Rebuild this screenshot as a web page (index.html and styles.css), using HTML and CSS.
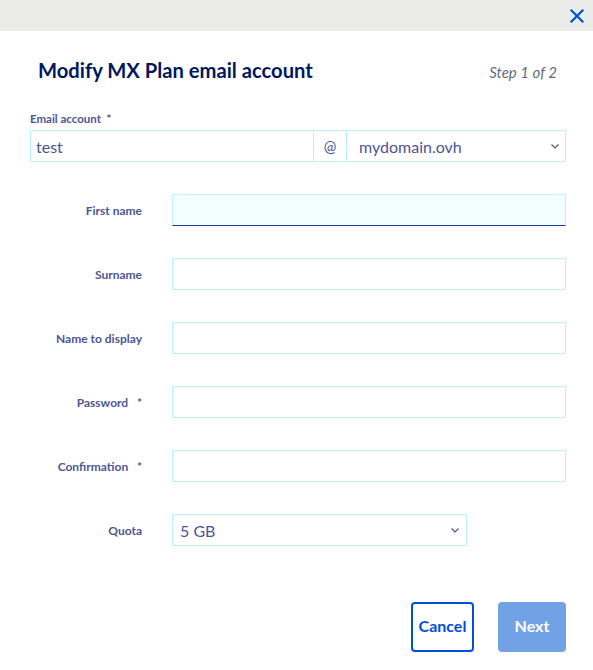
FILE: index.html
```html
<!DOCTYPE html>
<html lang="en">
<head>
<meta charset="utf-8">
<title>Modify MX Plan email account</title>
<link rel="stylesheet" href="styles.css">
</head>
<body>
<div class="modal">
  <div class="topbar">
    <button class="close" aria-label="Close">
      <svg width="14" height="14" viewBox="0 0 14 14"><path d="M1.5 1.5 L12.5 12.5 M12.5 1.5 L1.5 12.5" stroke="#0050d7" stroke-width="2.2" stroke-linecap="square" fill="none"/></svg>
    </button>
  </div>
  <div class="content">
    <div class="header">
      <h1 class="title">Modify MX Plan email account</h1>
      <span class="step">Step 1 of 2</span>
    </div>
    <div class="email-block">
      <label class="email-label">Email account&nbsp;&nbsp;*</label>
      <div class="email-group">
        <input class="field email-name" type="text" value="test">
        <span class="addon">@</span>
        <select class="field select domain"><option>mydomain.ovh</option></select>
      </div>
    </div>
    <div class="rows">
      <label class="row-label">First name</label>
      <input class="field focused" type="text">
      <label class="row-label">Surname</label>
      <input class="field" type="text">
      <label class="row-label">Name to display</label>
      <input class="field" type="text">
      <label class="row-label">Password&nbsp;&nbsp;&nbsp;*</label>
      <input class="field" type="password">
      <label class="row-label">Confirmation&nbsp;&nbsp;&nbsp;*</label>
      <input class="field" type="password">
      <label class="row-label">Quota</label>
      <select class="field select quota"><option>5 GB</option></select>
    </div>
    <div class="actions">
      <button class="btn btn-cancel">Cancel</button>
      <button class="btn btn-next">Next</button>
    </div>
  </div>
</div>
</body>
</html>
```

FILE: styles.css
```css
* { box-sizing: border-box; }
html, body { margin: 0; padding: 0; background: #fff; }
body { font-family: "Source Sans Pro", Lato, "Noto Sans", sans-serif; color: #4d5592; width: 593px; height: 670px; overflow: hidden; }
.modal { width: 593px; }
.topbar { height: 31px; background: #ebecea; display: flex; justify-content: flex-end; align-items: center; padding-right: 9px; }
.close { border: 0; background: transparent; padding: 0; width: 14px; height: 14px; display: flex; cursor: pointer; }
.content { padding: 0 27px 0 30px; }
.header { display: flex; justify-content: space-between; align-items: baseline; padding: 27px 9px 0 8px; height: 81px; }
.title { margin: 0; font-size: 20.2px; font-weight: 700; color: #00185e; letter-spacing: 0; }
.step { font-style: italic; font-size: 15px; color: #5f6b7a; }
.email-block { display: flex; flex-direction: column; }
.email-label { font-size: 11.5px; font-weight: 700; line-height: 13px; margin-bottom: 5px; }
.email-group { display: flex; height: 32px; }
.field { height: 32px; border: 1px solid #bef1ff; background: #fff; font-family: inherit; font-size: 16px; color: #4d5592; padding: 0 5px; outline: none; border-radius: 0; margin: 0; }
.email-name { flex: 1; min-width: 0; width: 284px; }
.addon { width: 32px; height: 32px; border: 1px solid #bef1ff; border-left: 0; border-right: 0; display: flex; align-items: center; justify-content: center; font-size: 15px; color: #4d5592; }
.select { appearance: none; -webkit-appearance: none; background-image: url("data:image/svg+xml;utf8,<svg xmlns='http://www.w3.org/2000/svg' width='8' height='5' viewBox='0 0 8 5'><path d='M0.5 0.5 L4 4 L7.5 0.5' stroke='%234d5592' stroke-width='1.2' fill='none'/></svg>"); background-repeat: no-repeat; background-position: right 6px center; padding-left: 12px; }
.domain { width: 220px; }
.rows { display: grid; grid-template-columns: 112px 1fr; column-gap: 30px; row-gap: 32px; margin-top: 32px; align-items: center; }
.row-label { font-size: 12px; font-weight: 700; text-align: right; }
.rows .field { width: 100%; }
.focused { background: #f2feff; border-bottom-color: #133e97; }
.rows .quota { width: 295px; padding-left: 7px; background-position: right 7px center; }
.actions { display: flex; justify-content: flex-end; gap: 24px; margin-top: 56px; }
.btn { height: 50px; font-family: inherit; font-size: 16px; font-weight: 700; border-radius: 4px; cursor: pointer; padding: 0 0 3px; }
.btn-cancel { width: 63px; border: 2px solid #0050d7; background: #fff; color: #0050d7; }
.btn-next { width: 68px; border: 0; background: #72a2e6; color: #fff; }
```
